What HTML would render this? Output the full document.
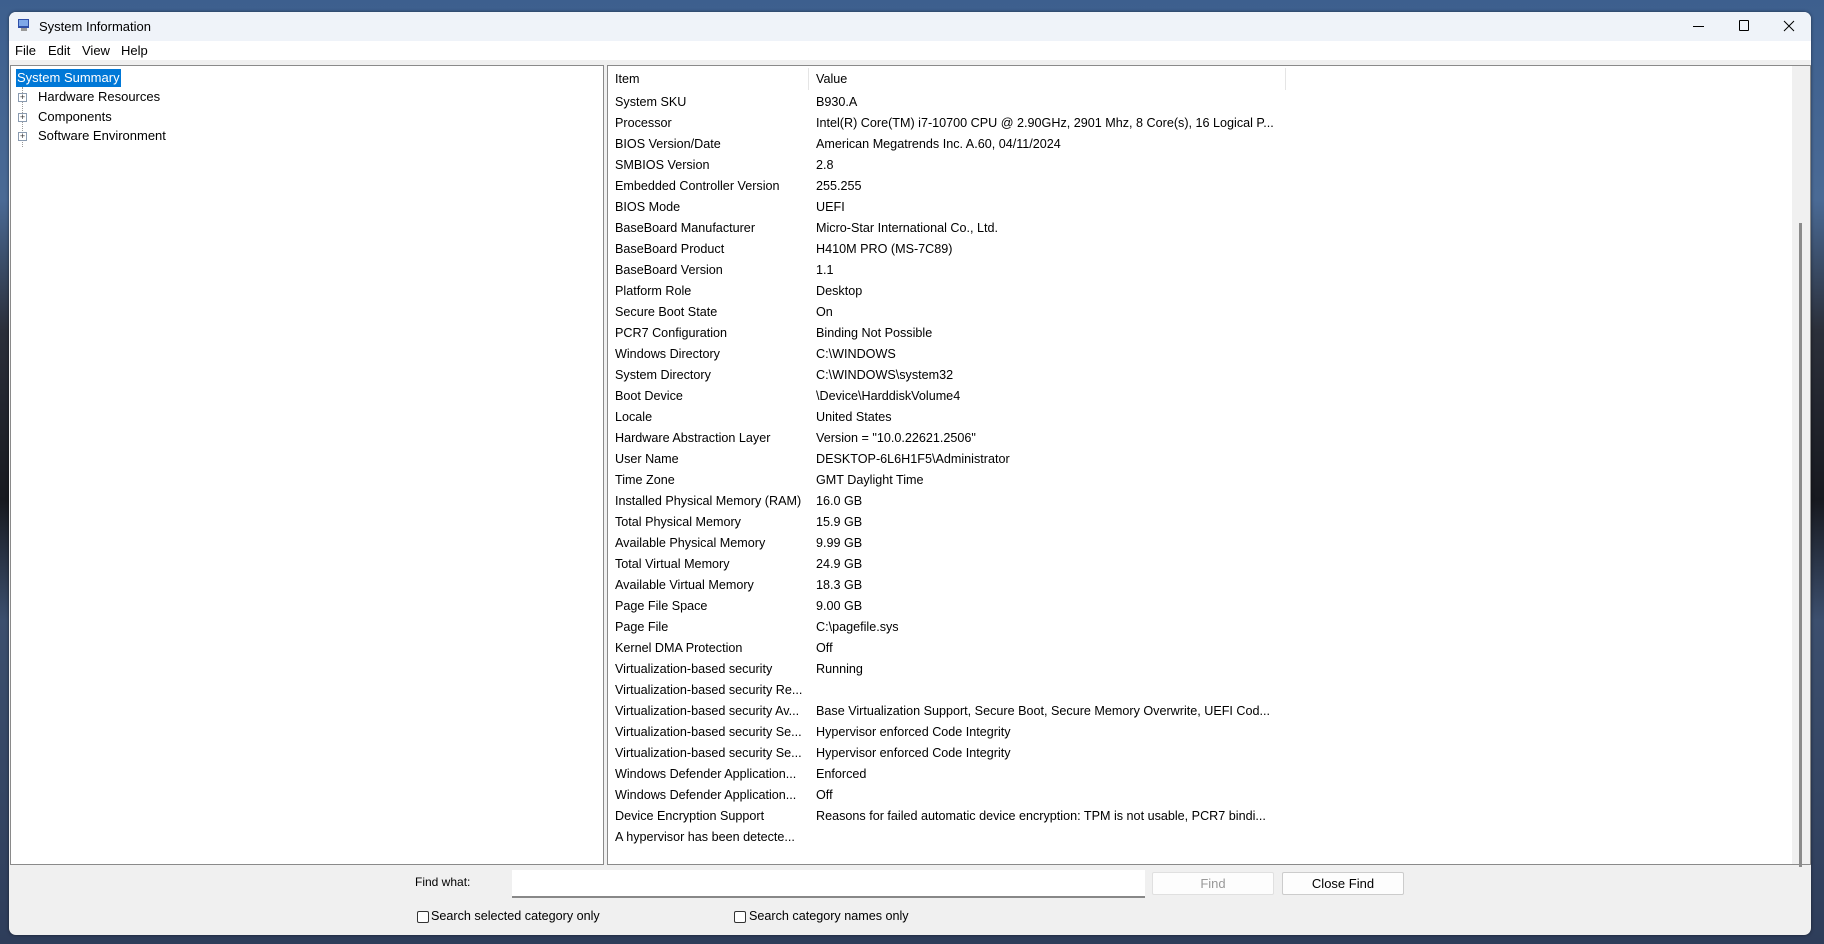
<!DOCTYPE html>
<html><head><meta charset="utf-8"><style>
*{margin:0;padding:0;box-sizing:border-box}
body{width:1824px;height:944px;overflow:hidden;position:relative;font-family:"Liberation Sans",sans-serif;font-size:12.6px;color:#000;
background:linear-gradient(180deg,#3d5f8e 0px,#4a6a95 200px,#2b2f3a 330px,#17191f 500px,#3c4f6e 620px,#2e3d5a 944px);}
.win{position:absolute;left:9px;top:12px;width:1802px;height:923px;background:#f0f0f0;border-radius:7px;overflow:hidden;box-shadow:0 0 3px rgba(0,0,0,.5)}
.title{position:absolute;left:0;top:0;width:100%;height:29px;background:#eff3f9}
.title span{position:absolute;left:30px;top:7px;font-size:13px}
.menu{position:absolute;left:0;top:29px;width:100%;height:19px;background:#fff}
.menu span{position:absolute;top:2px;font-size:13px}
.pane{position:absolute;background:#fff;border:1px solid #8a8a8a}
.t{position:absolute;white-space:nowrap}
.row{position:absolute;left:7px;white-space:nowrap}
.val{position:absolute;left:208px;white-space:nowrap}
.plus{position:absolute;width:9px;height:9px;border:1px solid #8a9bb0;background:#fff;font-size:9px;line-height:7px;text-align:center;color:#333}
.btn{position:absolute;height:23px;border:1px solid #ccc;background:#fdfdfd;text-align:center;line-height:21px;font-size:13px;border-radius:2px}
.cb{position:absolute;width:12px;height:12px;border:1px solid #333;background:#fff;border-radius:2px}
</style></head><body>
<div class="win">
 <div class="title">
  <svg style="position:absolute;left:8px;top:6px" width="14" height="14" viewBox="0 0 14 14"><rect x="1" y="1" width="11" height="9" fill="#2f4fa8"/><rect x="2" y="2" width="9" height="6" fill="#7fa8e8"/><rect x="4" y="10" width="6" height="3" fill="#999"/></svg>
  <span>System Information</span>
  <div style="position:absolute;left:1684px;top:14px;width:11px;height:1px;background:#000"></div>
  <div style="position:absolute;left:1730px;top:8px;width:10px;height:11px;border:1px solid #000;border-radius:1px"></div>
  <svg style="position:absolute;left:1774px;top:8px" width="12" height="12"><path d="M1 1L11 11M11 1L1 11" stroke="#000" stroke-width="1"/></svg>
 </div>
 <div class="menu"><span style="left:6px">File</span><span style="left:39px">Edit</span><span style="left:73px">View</span><span style="left:112px">Help</span></div>
 <div class="pane" style="left:1px;top:53px;width:594px;height:800px">
  <div class="t" style="left:5px;top:3px;height:18px;width:105px;background:#0078d7;color:#fff;padding:1px 1px;font-size:13px">System Summary</div>
  <div style="position:absolute;left:11px;top:21px;height:60px;border-left:1px dotted #999"></div>
  <div class="plus" style="left:7px;top:27px">+</div><div class="t" style="left:27px;top:23px;font-size:13px">Hardware Resources</div>
  <div class="plus" style="left:7px;top:47px">+</div><div class="t" style="left:27px;top:43px;font-size:13px">Components</div>
  <div class="plus" style="left:7px;top:66px">+</div><div class="t" style="left:27px;top:62px;font-size:13px">Software Environment</div>
 </div>
 <div class="pane" style="left:598px;top:53px;width:1204px;height:800px">
  <div style="position:absolute;left:1184px;top:0;width:18px;height:798px;background:#f0f0f0"></div>
  <div style="position:absolute;left:1191px;top:157px;width:3px;height:644px;background:#8b8b8b"></div>
  <div style="position:absolute;left:200px;top:2px;width:1px;height:22px;background:#e5e5e5"></div>
  <div style="position:absolute;left:677px;top:2px;width:1px;height:22px;background:#e5e5e5"></div>
  <div class="row" style="top:6px">Item</div><div class="val" style="top:6px">Value</div>
  <div style="position:absolute;top:29px;left:0;width:1180px">
   <div class="row" style="top:0">System SKU</div><div class="val" style="top:0">B930.A</div>
   <div class="row" style="top:21px">Processor</div><div class="val" style="top:21px">Intel(R) Core(TM) i7-10700 CPU @ 2.90GHz, 2901 Mhz, 8 Core(s), 16 Logical P...</div>
   <div class="row" style="top:42px">BIOS Version/Date</div><div class="val" style="top:42px">American Megatrends Inc. A.60, 04/11/2024</div>
   <div class="row" style="top:63px">SMBIOS Version</div><div class="val" style="top:63px">2.8</div>
   <div class="row" style="top:84px">Embedded Controller Version</div><div class="val" style="top:84px">255.255</div>
   <div class="row" style="top:105px">BIOS Mode</div><div class="val" style="top:105px">UEFI</div>
   <div class="row" style="top:126px">BaseBoard Manufacturer</div><div class="val" style="top:126px">Micro-Star International Co., Ltd.</div>
   <div class="row" style="top:147px">BaseBoard Product</div><div class="val" style="top:147px">H410M PRO (MS-7C89)</div>
   <div class="row" style="top:168px">BaseBoard Version</div><div class="val" style="top:168px">1.1</div>
   <div class="row" style="top:189px">Platform Role</div><div class="val" style="top:189px">Desktop</div>
   <div class="row" style="top:210px">Secure Boot State</div><div class="val" style="top:210px">On</div>
   <div class="row" style="top:231px">PCR7 Configuration</div><div class="val" style="top:231px">Binding Not Possible</div>
   <div class="row" style="top:252px">Windows Directory</div><div class="val" style="top:252px">C:\WINDOWS</div>
   <div class="row" style="top:273px">System Directory</div><div class="val" style="top:273px">C:\WINDOWS\system32</div>
   <div class="row" style="top:294px">Boot Device</div><div class="val" style="top:294px">\Device\HarddiskVolume4</div>
   <div class="row" style="top:315px">Locale</div><div class="val" style="top:315px">United States</div>
   <div class="row" style="top:336px">Hardware Abstraction Layer</div><div class="val" style="top:336px">Version = "10.0.22621.2506"</div>
   <div class="row" style="top:357px">User Name</div><div class="val" style="top:357px">DESKTOP-6L6H1F5\Administrator</div>
   <div class="row" style="top:378px">Time Zone</div><div class="val" style="top:378px">GMT Daylight Time</div>
   <div class="row" style="top:399px">Installed Physical Memory (RAM)</div><div class="val" style="top:399px">16.0 GB</div>
   <div class="row" style="top:420px">Total Physical Memory</div><div class="val" style="top:420px">15.9 GB</div>
   <div class="row" style="top:441px">Available Physical Memory</div><div class="val" style="top:441px">9.99 GB</div>
   <div class="row" style="top:462px">Total Virtual Memory</div><div class="val" style="top:462px">24.9 GB</div>
   <div class="row" style="top:483px">Available Virtual Memory</div><div class="val" style="top:483px">18.3 GB</div>
   <div class="row" style="top:504px">Page File Space</div><div class="val" style="top:504px">9.00 GB</div>
   <div class="row" style="top:525px">Page File</div><div class="val" style="top:525px">C:\pagefile.sys</div>
   <div class="row" style="top:546px">Kernel DMA Protection</div><div class="val" style="top:546px">Off</div>
   <div class="row" style="top:567px">Virtualization-based security</div><div class="val" style="top:567px">Running</div>
   <div class="row" style="top:588px">Virtualization-based security Re...</div>
   <div class="row" style="top:609px">Virtualization-based security Av...</div><div class="val" style="top:609px">Base Virtualization Support, Secure Boot, Secure Memory Overwrite, UEFI Cod...</div>
   <div class="row" style="top:630px">Virtualization-based security Se...</div><div class="val" style="top:630px">Hypervisor enforced Code Integrity</div>
   <div class="row" style="top:651px">Virtualization-based security Se...</div><div class="val" style="top:651px">Hypervisor enforced Code Integrity</div>
   <div class="row" style="top:672px">Windows Defender Application...</div><div class="val" style="top:672px">Enforced</div>
   <div class="row" style="top:693px">Windows Defender Application...</div><div class="val" style="top:693px">Off</div>
   <div class="row" style="top:714px">Device Encryption Support</div><div class="val" style="top:714px">Reasons for failed automatic device encryption: TPM is not usable, PCR7 bindi...</div>
   <div class="row" style="top:735px">A hypervisor has been detecte...</div>
  </div>
 </div>
 <div class="t" style="left:406px;top:863px;font-size:12px">Find what:</div>
 <div style="position:absolute;left:503px;top:858px;width:633px;height:28px;background:#fff;border-bottom:2px solid #888"></div>
 <div class="btn" style="left:1143px;top:860px;width:122px;color:#999;border-color:#e0e0e0">Find</div>
 <div class="btn" style="left:1273px;top:860px;width:122px">Close Find</div>
 <div class="cb" style="left:408px;top:899px"></div><div class="t" style="left:422px;top:897px">Search selected category only</div>
 <div class="cb" style="left:725px;top:899px"></div><div class="t" style="left:740px;top:897px">Search category names only</div>
</div>
</body></html>
